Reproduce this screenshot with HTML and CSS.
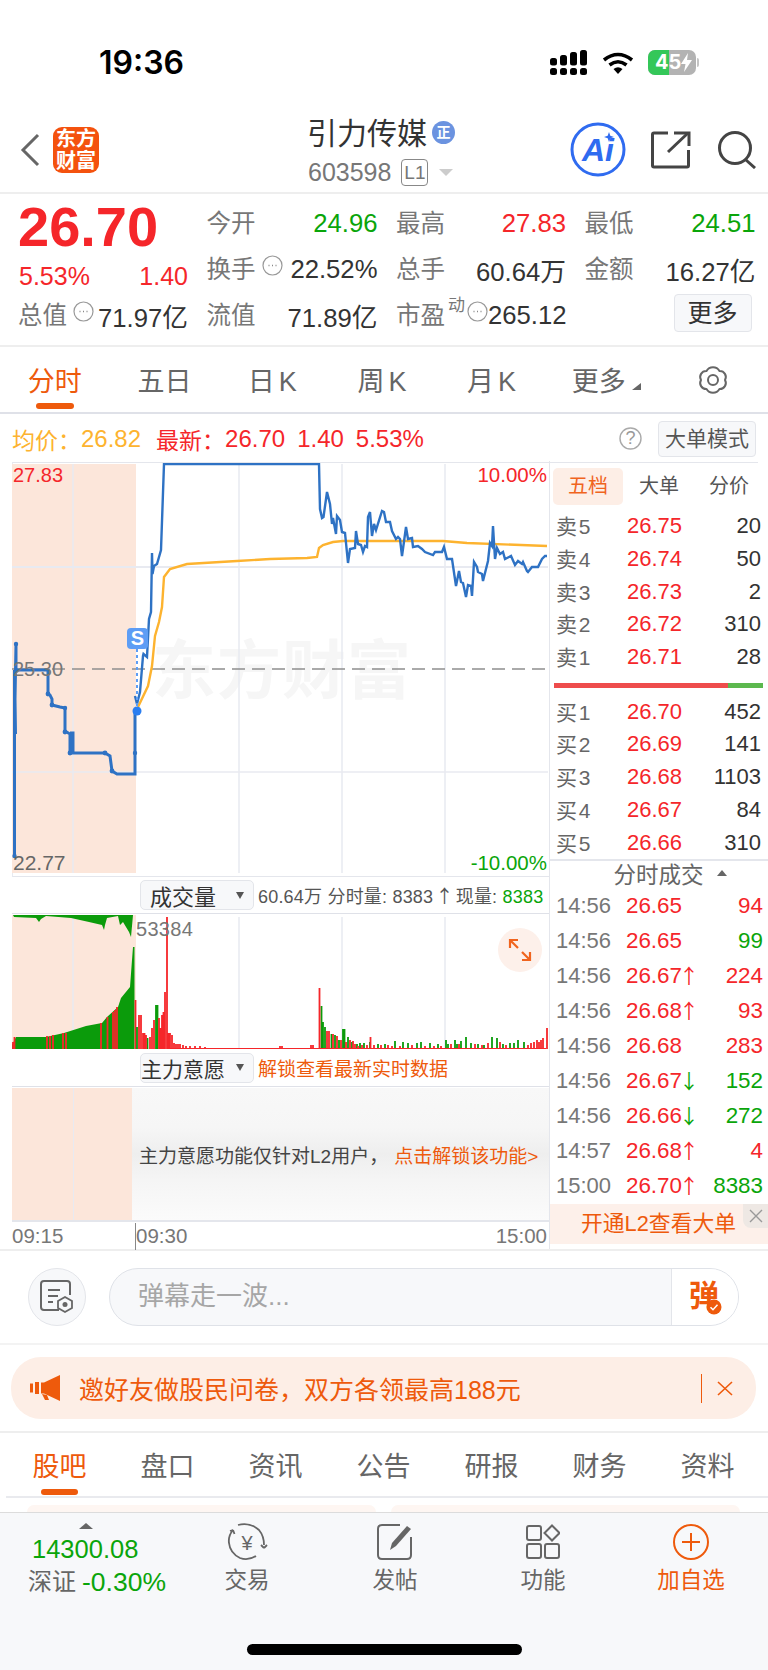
FILE: index.html
```html
<!DOCTYPE html>
<html lang="zh">
<head>
<meta charset="utf-8">
<title>引力传媒</title>
<link rel="stylesheet" href="styles.css">
</head>
<body>
<div class="page">

<header class="status">
  <div class="clock">19:36</div>
  <div class="status-icons">
    <svg class="sig" width="37" height="25" viewBox="0 0 37 25"><g fill="#000"><rect x="0" y="18" width="7" height="7" rx="2.5"/><rect x="10" y="18" width="7" height="7" rx="2.5"/><rect x="20" y="18" width="7" height="7" rx="2.5"/><rect x="30" y="18" width="7" height="7" rx="2.5"/><rect x="0" y="8" width="7" height="7.5" rx="2.5"/><rect x="10" y="5" width="7" height="10.5" rx="2.5"/><rect x="20" y="2" width="7" height="13.5" rx="2.5"/><rect x="30" y="0" width="7" height="15.5" rx="2.5"/></g></svg>
    <svg class="wifi" width="32" height="22" viewBox="0 0 32 22"><g fill="none" stroke="#000" stroke-width="3.6"><path d="M2 8 Q16 -3 30 8"/><path d="M7.5 13 Q16 6.5 24.500 13"/></g><path d="M11.500 17 Q16 13.500 20.500 17 L16 22Z" fill="#000"/></svg>
    <div class="battery"><span class="batt-fill"></span><span class="batt-text">45</span><svg class="bolt" width="11" height="19" viewBox="0 0 11 19"><path d="M7 0 L0 11 H4.500 L3 19 L11 7 H6Z" fill="#fff"/></svg><i class="batt-tip"></i></div>
  </div>
</header>

<nav class="nav">
  <svg class="back" width="20" height="34" viewBox="0 0 20 34"><path d="M18 2 L3 17 L18 32" fill="none" stroke="#666" stroke-width="3"/></svg>
  <div class="logo"><span>东方</span><span>财富</span></div>
  <div class="title-block">
    <div class="title-row"><span class="title">引力传媒</span><span class="badge-zheng">正</span></div>
    <div class="code-row"><span class="code">603598</span><span class="l1">L1</span><i class="caret"></i></div>
  </div>
  <svg class="ai" width="56" height="55" viewBox="0 0 56 55"><ellipse cx="28" cy="27.500" rx="26" ry="25.500" fill="none" stroke="#2f6bf0" stroke-width="3"/><text x="12" y="39" class="ai-text">Ai</text><path d="M39 10 L40.300 13.700 L44 15 L40.300 16.300 L39 20 L37.700 16.300 L34 15 L37.700 13.700Z" fill="#2f6bf0"/></svg>
  <svg class="share" width="40" height="38" viewBox="0 0 40 38"><g fill="none" stroke="#444" stroke-width="3"><path d="M17 2 H3 Q1.500 2 1.500 3.500 V34.500 Q1.500 36 3 36 H36 Q37.500 36 37.500 34.500 V19"/><path d="M17 21 L37 2"/><path d="M23 2 H38 V15"/></g></svg>
  <svg class="search" width="40" height="38" viewBox="0 0 40 38"><circle cx="18" cy="17" r="15.500" fill="none" stroke="#444" stroke-width="3"/><path d="M29 29 L38 37" stroke="#444" stroke-width="3"/></svg>
</nav>

<section class="stats">
  <div class="price-cell">
    <div class="price">26.70</div>
    <div class="change"><span>5.53%</span><span>1.40</span></div>
  </div>
  <div class="cell"><span class="lab">今开</span><span class="green">24.96</span></div>
  <div class="cell"><span class="lab">最高</span><span class="red">27.83</span></div>
  <div class="cell"><span class="lab">最低</span><span class="green">24.51</span></div>
  <div class="cell"><span class="lab with-hint">换手<svg class="hint" width="21" height="21" viewBox="0 0 21 21"><circle cx="10.500" cy="10.500" r="9.500" fill="none" stroke="#999" stroke-width="1.200"/><path d="M6.500 10.500h1M10 10.500h1M13.500 10.500h1" stroke="#888" stroke-width="1.500"/></svg></span><span>22.52%</span></div>
  <div class="cell"><span class="lab">总手</span><span>60.64万</span></div>
  <div class="cell"><span class="lab">金额</span><span>16.27亿</span></div>
  <div class="cell"><span class="lab with-hint">总值<svg class="hint" width="21" height="21" viewBox="0 0 21 21"><circle cx="10.500" cy="10.500" r="9.500" fill="none" stroke="#999" stroke-width="1.200"/><path d="M6.500 10.500h1M10 10.500h1M13.500 10.500h1" stroke="#888" stroke-width="1.500"/></svg></span><span>71.97亿</span></div>
  <div class="cell"><span class="lab">流值</span><span>71.89亿</span></div>
  <div class="cell"><span class="lab with-hint">市盈<sup class="dyn">动</sup><svg class="hint hint-tight" width="21" height="21" viewBox="0 0 21 21"><circle cx="10.500" cy="10.500" r="9.500" fill="none" stroke="#999" stroke-width="1.200"/><path d="M6.500 10.500h1M10 10.500h1M13.500 10.500h1" stroke="#888" stroke-width="1.500"/></svg></span><span>265.12</span></div>
  <div class="cell cell-more"><button class="more">更多</button></div>
</section>

<div class="period-tabs">
  <div class="ptab active">分时</div>
  <div class="ptab">五日</div>
  <div class="ptab k-tab">日K</div>
  <div class="ptab k-tab">周K</div>
  <div class="ptab k-tab">月K</div>
  <div class="ptab more-tab">更多<i class="corner"></i></div>
  <div class="ptab"><svg width="32" height="28" viewBox="0 0 32 28"><path d="M9.500 5 A7.500 7.500 0 0 1 22.500 5 A6 6 0 0 1 28 14 A6 6 0 0 1 22.500 23 A7.500 7.500 0 0 1 9.500 23 A6 6 0 0 1 4 14 A6 6 0 0 1 9.500 5Z" fill="none" stroke="#666" stroke-width="2" stroke-linejoin="round"/><circle cx="16" cy="14" r="5" fill="none" stroke="#666" stroke-width="2"/></svg></div>
</div>

<div class="info">
  <span class="avg">均价：</span><span class="avg v">26.82</span>
  <span class="red lbl">最新：</span><span class="red v">26.70</span><span class="red v">1.40</span><span class="red v">5.53%</span>
  <svg class="help" width="23" height="23" viewBox="0 0 23 23"><circle cx="11.500" cy="11.500" r="10.500" fill="none" stroke="#aaa" stroke-width="1.400"/><text x="11.500" y="17" class="help-q">?</text></svg>
  <button class="big-btn">大单模式</button>
</div>

<main class="main">
  <div class="charts">
    <div class="pc">
      <svg class="pc-svg" width="536" height="412" viewBox="12 464 536 412">
        <rect x="12" y="465" width="124" height="409" fill="#fce6da"/>
        <text x="152" y="694" class="watermark">东方财富</text>
        <g stroke="#e8eaf1" stroke-width="1.500"><path d="M73 465V874M239 465V874M342 465V874M445 465V874"/><path d="M12 568H548" stroke-width="2"/><path d="M12 773H548"/></g>
        <path d="M12 670H548" stroke="#8e8e8e" stroke-width="1.600" stroke-dasharray="13 7"/>
        <path d="M138 708 L148 687 L152 667 L155 637 L159 623 L162 608 L164 578 L170 570 L187 565 L237 562 L270 560 L307 559 L317 558 L319 549 L323 546 L333 543 L343 542 L383 542 L443 542 L467 544 L547 547" fill="none" stroke="#fdb32f" stroke-width="2.400"/>
        <path d="M14.500 857 V671 L15.500 735 L15 700 L16 645 L16 671 H48 V695 L50 696 L52 700 V706 L60 708 L65 709 V732 L70 735 V754 H73 V734 H70 M73 754 H105 L110 757 L112 772 L117 775 H135 V712" fill="none" stroke="#2e72c4" stroke-width="3"/>
        <g fill="#2e72c4"><circle cx="14.500" cy="857" r="2.200"/><circle cx="16" cy="645" r="2.200"/><circle cx="48" cy="695" r="2.400"/><circle cx="52" cy="706" r="2.400"/><circle cx="65" cy="709" r="2.200"/><circle cx="65" cy="733" r="2.400"/><circle cx="70" cy="754" r="2.400"/><circle cx="105" cy="754" r="2.400"/><circle cx="112" cy="772" r="2.400"/><circle cx="135" cy="754" r="2.200"/></g>
        <path d="M135 697 L137 705 L140 693 L143 657 L143.500 655 L147 658 L149 620 L151 613 L152 554 L152.500 575 L154 567 L157 565 L161 551 L164 465 H319 L320 510 L322 519 L323.500 518 L327 493 L330 505 L332 525 L333 519 L336 535 L337 517 L340 521 L342 533 L345 534 L348 564 L350 550 L355 549 L356 532 L358 545 L361 546 L363 553 L365 547 L367 548 L368 518 L370 513 L372 537 L374 525 L376 531 L382 512 L384 513 L386 523 L390 523 L392 532 L396 540 L398 538 L400 540 L402 557 L406 528 L408 540 L412 539 L413 548 L418 547 L422 550 L425 553 L433 556 L435 553 L442 553 L444 548 L447 560 L452 560 L456 587 L459 572 L461 583 L463 584 L466 598 L468 586 L471 587 L472 597 L474 563 L477 568 L478 573 L482 575 L483 582 L488 562 L490 544 L492 547 L493 527 L495 560 L497 549 L500 555 L503 553 L505 560 L511 557 L515 566 L518 562 L522 565 L523 563 L527 572 L528 573 L532 568 L538 568 L542 560 L545 557 L547 557" fill="none" stroke="#2e72c4" stroke-width="2.400"/>
        <path d="M137 650 V708" stroke="#5d9df5" stroke-width="2" stroke-dasharray="3 3"/>
        <circle cx="137" cy="712" r="4.500" fill="#2b7ef0"/>
      </svg>
      <span class="plabel tl red">27.83</span>
      <span class="plabel tr red">10.00%</span>
      <span class="plabel mid">25.30</span>
      <span class="plabel bl green">22.77</span>
      <span class="plabel br green">-10.00%</span>
      <span class="s-badge">S</span>
    </div>

    <div class="chart-head">
      <div class="drop drop-vol"><span>成交量</span><i class="tri"></i></div>
      <div class="vol-info">60.64万 分时量: 8383 <span class="cjk-arrow">↑</span> 现量: <b>8383</b></div>
    </div>

    <div class="vc">
      <svg class="vc-svg" width="536" height="135" viewBox="12 914 536 135">
        <rect x="12" y="915" width="124" height="134" fill="#fce6da"/>
        <path d="M73 917V1049M239 917V1049M342 917V1049M445 917V1049" stroke="#e8eaf1" stroke-width="1.500"/>
        <path d="M13 915 L14 917 L36 918 L39 922 L41 919 L46 916 L71 918 L89 922 L102 925 L104 930 L105 925 L107 918 L118 916 L120 925 L123 922 L129 932 L131 937 L133 915Z" fill="#0b9b0b"/>
        <path d="M12 1049 V1045 L16 1037 H46 L64 1033 L86 1026 L102 1023 L107 1017 L118 1007 L121 998 L130 987 L132 960 L133 947 H134.500 V1049Z" fill="#0b9b0b"/>
        <path d="M13 1049V1042M14.500 1049V1037M47 1049V1036M50 1049V1036M53 1049V1035M63 1049V1033M66 1049V1033M101 1049V1023M107.500 1049V1017M113 1049V1012M115 1049V1010M117 1049V1007M135.500 1049V1000" stroke="#f5262a" stroke-width="1.800"/>
        <path d="M137 1049V1027M147.500 1049V1038M156 1049V1005M157.500 1049V1005M321.500 1049V1006M323 1049V1022M325 1049V1027M331.500 1049V1034M335 1049V1035M339 1049V1040M343 1049V1029M344.500 1049V1029M348 1049V1037M352 1049V1042M357 1049V1044M360 1049V1043M364 1049V1043M370 1049V1042M378 1049V1044M385 1049V1044M395 1049V1041M403 1049V1042M408 1049V1043M417 1049V1043M421 1049V1042M430 1049V1043M438 1049V1044M446 1049V1040M448 1049V1044M455 1049V1040M457 1049V1044M461 1049V1041M466 1049V1037M471 1049V1043M478 1049V1044M484 1049V1045M492 1049V1037M497 1049V1038M503 1049V1044M510 1049V1043M514 1049V1043M518 1049V1040M524 1049V1042" stroke="#0b9b0b" stroke-width="1.800"/>
        <path d="M139 1049V1015M141 1049V1015M143 1049V1033M144.500 1049V1033M146 1049V1035M150 1049V1037M152 1049V1028M154 1049V1020M159 1049V1018M160.500 1049V1028M162 1049V1015M163.500 1049V1012M165 1049V992M167 1049V917M168.500 1049V1033M170 1049V1033M172 1049V1035M174 1049V1043M176 1049V1044M178 1049V1044M180 1049V1044M183 1049V1045M186 1049V1046M190 1049V1046M195 1049V1046M200 1049V1046M205 1049V1047M280 1049V1046M282 1049V1046M311 1049V1045M313 1049V1045M319.500 1049V988M327 1049V1031M329 1049V1031M333 1049V1034M337 1049V1036M341 1049V1040M346 1049V1042M350 1049V1040M353 1049V1041M355 1049V1044M358 1049V1046M362 1049V1045M367 1049V1045M370.500 1049V1037M374 1049V1045M381 1049V1045M388 1049V1045M392 1049V1046M400 1049V1046M412 1049V1045M425 1049V1046M434 1049V1046M441 1049V1046M451 1049V1044M459 1049V1044M475 1049V1044M482 1049V1045M488 1049V1043M500 1049V1042M506 1049V1045M528 1049V1045M531 1049V1043M534 1049V1042M537 1049V1040M539 1049V1042M541 1049V1040M543 1049V1038M547 1049V1028" stroke="#f5262a" stroke-width="1.800"/>
        <path d="M170 1048.500H546" stroke="#f5262a" stroke-width="1.200"/>
      </svg>
      <span class="vol-peak">53384</span>
      <div class="expand"><svg width="24" height="24" viewBox="0 0 24 24"><g fill="none" stroke="#f0641e" stroke-width="2.200"><path d="M2 10V2H10M2 2L10 10"/><path d="M22 14V22H14M22 22L14 14"/></g></svg></div>
    </div>

    <div class="chart-head head-intent">
      <div class="drop drop-intent"><span>主力意愿</span><i class="tri"></i></div>
      <div class="unlock">解锁查看最新实时数据</div>
    </div>

    <div class="intent">
      <div class="intent-peach"><i></i></div>
      <div class="intent-lock"><span>主力意愿功能仅针对L2用户，</span><span class="orange">点击解锁该功能&gt;</span></div>
    </div>

    <div class="axis"><span>09:15</span><span class="axis-open">09:30</span><span>15:00</span></div>
  </div>

  <aside class="side">
    <div class="side-tabs">
      <div class="stab active">五档</div>
      <div class="stab">大单</div>
      <div class="stab">分价</div>
    </div>
    <div class="book">
      <div class="brow"><span class="bl">卖 5</span><span class="bp red">26.75</span><span class="bv">20</span></div>
      <div class="brow"><span class="bl">卖 4</span><span class="bp red">26.74</span><span class="bv">50</span></div>
      <div class="brow"><span class="bl">卖 3</span><span class="bp red">26.73</span><span class="bv">2</span></div>
      <div class="brow"><span class="bl">卖 2</span><span class="bp red">26.72</span><span class="bv">310</span></div>
      <div class="brow"><span class="bl">卖 1</span><span class="bp red">26.71</span><span class="bv">28</span></div>
    </div>
    <div class="ratio"><i class="ratio-red"></i><i class="ratio-green"></i></div>
    <div class="book book-buy">
      <div class="brow"><span class="bl">买 1</span><span class="bp red">26.70</span><span class="bv">452</span></div>
      <div class="brow"><span class="bl">买 2</span><span class="bp red">26.69</span><span class="bv">141</span></div>
      <div class="brow"><span class="bl">买 3</span><span class="bp red">26.68</span><span class="bv">1103</span></div>
      <div class="brow"><span class="bl">买 4</span><span class="bp red">26.67</span><span class="bv">84</span></div>
      <div class="brow"><span class="bl">买 5</span><span class="bp red">26.66</span><span class="bv">310</span></div>
    </div>
    <div class="deals-head">分时成交<i class="tri-up"></i></div>
    <div class="deals">
      <div class="drow"><span class="dt">14:56</span><span class="dp red">26.65</span><span class="da"></span><span class="dv red">94</span></div>
      <div class="drow"><span class="dt">14:56</span><span class="dp red">26.65</span><span class="da"></span><span class="dv green">99</span></div>
      <div class="drow"><span class="dt">14:56</span><span class="dp red">26.67</span><span class="da red">↑</span><span class="dv red">224</span></div>
      <div class="drow"><span class="dt">14:56</span><span class="dp red">26.68</span><span class="da red">↑</span><span class="dv red">93</span></div>
      <div class="drow"><span class="dt">14:56</span><span class="dp red">26.68</span><span class="da"></span><span class="dv red">283</span></div>
      <div class="drow"><span class="dt">14:56</span><span class="dp red">26.67</span><span class="da green">↓</span><span class="dv green">152</span></div>
      <div class="drow"><span class="dt">14:56</span><span class="dp red">26.66</span><span class="da green">↓</span><span class="dv green">272</span></div>
      <div class="drow"><span class="dt">14:57</span><span class="dp red">26.68</span><span class="da red">↑</span><span class="dv red">4</span></div>
      <div class="drow"><span class="dt">15:00</span><span class="dp red">26.70</span><span class="da red">↑</span><span class="dv green">8383</span></div>
    </div>
    <div class="l2-banner">开通L2查看大单<div class="l2-close"><svg width="14" height="14" viewBox="0 0 14 14"><path d="M1 1L13 13M13 1L1 13" stroke="#999" stroke-width="1.400"/></svg></div></div>
  </aside>
</main>

<div class="danmu">
  <div class="danmu-btn"><svg width="34" height="34" viewBox="0 0 34 34"><g fill="none" stroke="#666" stroke-width="2"><path d="M19 30 H4 Q1 30 1 27 V4 Q1 1 4 1 H27 Q30 1 30 4 V15"/><path d="M8 10H20M8 16H18M8 22H13"/><path d="M25 17 L32 21 V28 L25 32 L18 28 V21Z" stroke-width="1.800"/></g><circle cx="25" cy="24.500" r="2.500" fill="#666"/></svg></div>
  <div class="danmu-input"><span class="danmu-ph">弹幕走一波...</span><span class="danmu-send">弹<svg class="danmu-check" width="16" height="16" viewBox="0 0 16 16"><circle cx="8" cy="8" r="7.500" fill="#ee5a0c"/><path d="M4.500 8.200L7 10.700L11.500 5.700" fill="none" stroke="#fff" stroke-width="1.500"/></svg></span></div>
</div>

<div class="notice-wrap">
  <div class="notice">
    <svg width="30" height="26" viewBox="0 0 30 26"><path d="M30 0 V26 L14 18.500 H11 V7.500 H14Z" fill="#ee5a0c"/><path d="M12 19 L15 25 H19 L17 20Z" fill="#ee5a0c"/><rect x="0" y="8.500" width="3" height="9" fill="#ee5a0c"/><rect x="5" y="7" width="4" height="12" fill="#ee5a0c"/></svg>
    <span class="notice-text">邀好友做股民问卷，双方各领最高188元</span>
    <i class="notice-sep"></i>
    <svg width="16" height="15" viewBox="0 0 16 15"><path d="M1 1L15 14M15 1L1 14" stroke="#ee5a0c" stroke-width="1.600"/></svg>
  </div>
</div>

<div class="sub-tabs">
  <div class="sub active">股吧</div>
  <div class="sub">盘口</div>
  <div class="sub">资讯</div>
  <div class="sub">公告</div>
  <div class="sub">研报</div>
  <div class="sub">财务</div>
  <div class="sub">资料</div>
</div>

<div class="peek"><i></i><i></i></div>

<footer class="toolbar">
  <div class="index">
    <i class="index-tri"></i>
    <div class="index-val green">14300.08</div>
    <div class="index-row"><span>深证</span><span class="green">-0.30%</span></div>
  </div>
  <div class="tool">
    <svg width="42" height="38" viewBox="0 0 42 38"><g fill="none" stroke="#666" stroke-width="1.800"><path d="M7 7 Q2 13 3 20 Q4 30 14 35 Q22 38 30 33"/><path d="M12 2 Q24 -1 33 7 Q38 13 38 22"/><path d="M7 7L4 8M7 7L8.500 11M38 25L41 22M38 25L35 22"/></g><text x="21" y="27" class="yen">¥</text></svg>
    <span>交易</span>
  </div>
  <div class="tool">
    <svg width="36" height="36" viewBox="0 0 36 36"><g fill="none" stroke="#666" stroke-width="2"><path d="M23 1 H5 Q1 1 1 5 V31 Q1 35 5 35 H30 Q34 35 34 31 V13"/></g><path d="M13 26 L15 19 L30 2 L34 5 L19 22Z" fill="#666"/></svg>
    <span>发帖</span>
  </div>
  <div class="tool">
    <svg width="34" height="34" viewBox="0 0 34 34"><g fill="none" stroke="#666" stroke-width="2"><rect x="1" y="1" width="14" height="14" rx="2"/><rect x="1" y="19" width="14" height="14" rx="2"/><rect x="19" y="19" width="14" height="14" rx="2"/><path d="M26 0.500 L33.500 8 L26 15.500 L18.500 8Z"/></g></svg>
    <span>功能</span>
  </div>
  <div class="tool tool-add">
    <svg width="36" height="36" viewBox="0 0 36 36"><circle cx="18" cy="18" r="17" fill="none" stroke="#ee5a0c" stroke-width="2"/><path d="M18 9V27M9 18H27" stroke="#ee5a0c" stroke-width="2"/></svg>
    <span>加自选</span>
  </div>
  <i class="home"></i>
</footer>

</div>
</body>
</html>
```

FILE: styles.css
```css
* { box-sizing: border-box; }
html, body { margin: 0; padding: 0; background: #fff; }
body { font-family: "Liberation Sans", "Noto Sans CJK SC", sans-serif; color: #333; }
.page { width: 768px; height: 1670px; overflow: hidden; position: relative; }
i { display: block; font-style: normal; }
button { font: inherit; padding: 0; cursor: pointer; }
.red { color: #f5262a; }
.green { color: #0aa50a; }
.orange { color: #ee5a0c; }

/* status bar */
.status { height: 105px; display: flex; justify-content: space-between; align-items: flex-start; padding: 47px 72px 0 99px; }
.clock { font-family: Inter, "Liberation Sans", sans-serif; font-weight: 600; font-size: 32px; line-height: 31px; color: #000; }
.status-icons { display: flex; align-items: flex-start; padding-top: 3px; }
.wifi { margin-left: 15px; margin-top: 2px; }
.battery { position: relative; width: 48px; height: 25px; margin-left: 14px; background: #b3b3b3; border-radius: 7px; overflow: visible; color: #fff; font-family: Inter, sans-serif; font-weight: 700; font-size: 20px; line-height: 25px; }
.batt-fill { position: absolute; left: 0; top: 0; bottom: 0; width: 21px; background: #34c759; border-radius: 7px 0 0 7px; }
.batt-text { position: absolute; left: 7px; top: 0; }
.bolt { position: absolute; left: 33px; top: 3px; }
.batt-tip { position: absolute; right: -3px; top: 8px; width: 2px; height: 9px; background: #c4c4c4; border-radius: 0 2px 2px 0; }

/* nav */
.nav { height: 87px; display: flex; align-items: center; position: relative; }
.back { margin-left: 20px; margin-top: 2px; }
.logo { width: 46px; height: 46px; margin-left: 13px; margin-top: 2px; border-radius: 9px; background: #f4520e; color: #fff; font-weight: 700; font-size: 20px; line-height: 22px; display: flex; flex-direction: column; align-items: center; justify-content: center; }
.title-block { margin-left: 208px; width: 148px; }
.title-row { display: flex; align-items: center; height: 36px; margin-top: 6px; }
.title { font-size: 30px; line-height: 36px; color: #333; }
.badge-zheng { width: 23px; height: 23px; margin-left: 5px; margin-top: -4px; border-radius: 50%; background: #6b93e0; color: #fff; font-size: 14px; font-weight: 700; line-height: 23px; text-align: center; }
.code-row { display: flex; align-items: center; height: 30px; margin-top: 5px; }
.code { font-size: 25px; color: #777; line-height: 30px; margin-right: 10px; margin-left: 1px; }
.l1 { width: 27px; height: 27px; border: 1px solid #888; border-radius: 4px; font-size: 19px; line-height: 25px; text-align: center; color: #777; }
.caret { margin-left: 11px; width: 0; height: 0; border-left: 7px solid transparent; border-right: 7px solid transparent; border-top: 7px solid #ccc; }
.ai { margin-left: 115px; margin-top: 2px; flex: none; }
.ai-text { font-family: "Liberation Sans", sans-serif; font-weight: 700; font-style: italic; font-size: 32px; fill: #2f6bf0; }
.share { margin-left: 25px; margin-top: 2px; flex: none; }
.search { margin-left: 26px; margin-top: 2px; flex: none; }

/* stats */
.stats { border-top: 2px solid #eee; border-bottom: 2px solid #eee; height: 155px; padding: 6px 13px 0 19px; display: grid; grid-template-columns: 169px 170px 169px 170px; column-gap: 19.500px; grid-template-rows: 46px 46px 46px; font-size: 25.700px; color: #333; }
.price-cell { grid-row: span 2; }
.price { font-size: 56px; line-height: 52px; font-weight: 700; color: #f5262a; margin-top: 1px; margin-left: -1px; }
.change { display: flex; justify-content: space-between; color: #f5262a; font-size: 25px; line-height: 28px; margin-top: 9px; }
.cell { display: flex; justify-content: space-between; align-items: center; white-space: nowrap; }
.lab { color: #777; display: flex; align-items: center; font-size: 24.500px; padding-bottom: 4px; margin-left: -1px; }
.hint { margin-left: 6px; margin-top: -4px; }
.hint-tight { margin-left: 2px; margin-top: -4px; }
.dyn { font-size: 17px; line-height: 18px; margin: -14px 0 0 3px; }
.cell-more { justify-content: flex-end; padding-right: 4px; }
.more { width: 78px; height: 38px; background: #f7f8fa; border: 1px solid #e3e5ea; border-radius: 4px; color: #333; font-size: 25px; line-height: 36px; margin-top: -5px; }

/* period tabs */
.period-tabs { height: 67px; border-bottom: 2px solid #dfe1e8; display: grid; grid-template-columns: repeat(7, 109.700px); font-size: 27px; color: #666; }
.ptab { position: relative; display: flex; align-items: center; justify-content: center; height: 65px; white-space: nowrap; }
.ptab.active { color: #ee5a0c; }
.ptab.active::after { content: ""; position: absolute; left: 36px; top: 56px; width: 38px; height: 6px; border-radius: 3px; background: #ee5a0c; }
.k-tab { letter-spacing: 4px; }
.more-tab { padding-left: 6px; }
.corner { width: 0; height: 0; border-left: 9px solid transparent; border-bottom: 7px solid #666; margin: 14px 0 0 6px; }

/* info */
.info { height: 47px; display: flex; align-items: center; gap: 12px; padding: 2px 12px 0 12px; font-size: 24px; }
.info .avg, .info .lbl { font-size: 23px; }
.info .avg { color: #fdb32f; }
.info .avg.v { font-size: 24px; margin-left: -12px; margin-right: 3px; }
.info .lbl + .v { margin-left: -12px; }
.help { margin-left: auto; flex: none; }
.help-q { font-size: 18px; fill: #999; text-anchor: middle; }
.big-btn { width: 98px; height: 36px; background: #f7f8fa; border: 1px solid #e3e5ea; border-radius: 4px; font-size: 21px; line-height: 34px; color: #555; margin-left: 4px; margin-top: 0; }

/* main */
.main { height: 788px; display: flex; }
.charts { width: 537px; margin-left: 12px; flex: none; }
.pc { position: relative; height: 415px; border-top: 1px solid #e4e6ec; border-bottom: 1px solid #e4e6ec; margin-top: 1px; border-left: 1px solid #e8eaf0; }
.pc-svg { display: block; margin-left: -1px; }
.watermark { font-size: 64px; fill: #f6f6f6; font-weight: 700; letter-spacing: 1px; }
.plabel { position: absolute; font-size: 20.500px; line-height: 20px; white-space: nowrap; }
.tl { left: 0; top: 2px; font-size: 20px; }
.tr { right: 2px; top: 2px; }
.mid { left: 0; top: 196px; color: #777; font-size: 20px; }
.bl { left: 0; top: 390px; font-size: 20px; }
.br { right: 2px; top: 390px; }
.s-badge { position: absolute; left: 114px; top: 165px; width: 21px; height: 21px; border-radius: 4px; background: #5d9df5; color: #fff; font-weight: 700; font-size: 20px; line-height: 21px; text-align: center; }

.chart-head { height: 37px; display: flex; align-items: center; padding-left: 128px; border-bottom: 1px solid #dfe1e8; }
.head-intent { height: 38px; }
.drop { width: 114px; height: 30px; background: #f7f8fa; border: 1px solid #e3e5ea; border-radius: 5px; display: flex; align-items: center; justify-content: space-between; font-size: 22px; color: #333; }
.drop-vol { padding: 0 9px; }
.drop-intent { padding: 0 9px 0 0; font-size: 21px; }
.tri { width: 0; height: 0; border-left: 4.500px solid transparent; border-right: 4.500px solid transparent; border-top: 7px solid #555; }
.vol-info { margin-left: 4px; font-size: 18px; letter-spacing: 0.200px; color: #555; white-space: nowrap; }
.vol-info b { font-weight: 400; color: #0aa50a; }
.cjk-arrow { font-family: "Noto Sans CJK SC", sans-serif; display: inline-block; width: 12px; text-indent: -3px; }
.unlock { margin-left: 4px; font-size: 19px; color: #ee5a0c; white-space: nowrap; }

.vc { position: relative; height: 135px; }
.vc-svg { display: block; }
.vol-peak { position: absolute; left: 124px; top: 7px; font-size: 20px; line-height: 16px; color: #777; letter-spacing: 0.300px; }
.expand { position: absolute; left: 486px; top: 14px; width: 44px; height: 44px; border-radius: 50%; background: #fdf0ea; display: flex; align-items: center; justify-content: center; }

.intent { height: 135px; display: flex; border-bottom: 2px solid #e4e6ec; padding-top: 1px; }
.intent-peach { width: 120px; background: #fce6da; position: relative; }
.intent-peach i { position: absolute; left: 61px; top: 0; bottom: 0; width: 1px; background: #e8eaf1; }
.intent-lock { flex: 1; display: flex; align-items: center; padding-left: 7px; gap: 6px; font-size: 19px; color: #444; white-space: nowrap; background: linear-gradient(#f8f8f8 0%, #f6f6f6 30%, #eeeeee 50%, #f5f5f5 70%, #fbfbfb 100%); }

.axis { height: 27px; display: flex; justify-content: space-between; align-items: center; font-size: 20.500px; color: #777; padding-right: 2px; position: relative; }
.axis-open { position: absolute; left: 124px; }
.axis-open::before { content: ""; position: absolute; left: -1px; top: -1px; height: 27px; width: 1px; background: #888; }

/* side panel */
.side { width: 219px; flex: none; border-left: 1px solid #e4e6ec; }
.side-tabs { display: grid; grid-template-columns: 71px 70px 70px; padding: 5px 0 0 3px; height: 48px; font-size: 20px; color: #555; border-top: 1px solid #e4e6ec; margin-right: 10px; margin-top: 1px; }
.stab { height: 37px; line-height: 37px; text-align: center; white-space: nowrap; }
.stab.active { width: 70px; background: #fdeee6; border-radius: 5px; color: #f0641e; }
.book { padding: 0 7px 0 6px; }
.brow { height: 32.700px; display: flex; align-items: center; font-size: 22px; color: #333; }
.bl { width: 66px; font-size: 21px; color: #666; word-spacing: -4px; white-space: nowrap; padding-bottom: 2px; }
.bp { width: 60px; text-align: right; }
.bv { flex: 1; text-align: right; }
.ratio { height: 5px; margin: 10px 5px 7px 4px; display: flex; }
.ratio-red { width: 174px; background: #ee4c4c; }
.ratio-green { flex: 1; background: #5cb84e; }
.deals-head { border-top: 2px solid #e4e6ec; height: 30px; display: flex; align-items: center; justify-content: center; font-size: 22.500px; color: #666; padding: 0 0 3px 22px; margin-top: 0; }
.tri-up { width: 0; height: 0; border-left: 5px solid transparent; border-right: 5px solid transparent; border-bottom: 6px solid #666; margin-left: 13px; }
.deals { height: 315px; }
.drow { height: 35px; display: flex; align-items: center; font-size: 22.400px; padding: 0 5px 0 6px; white-space: nowrap; }
.dt { width: 57px; color: #777; font-size: 22px; }
.dp { width: 69px; text-align: right; }
.da { width: 14px; font-family: "Noto Sans CJK SC", sans-serif; font-size: 20px; line-height: 20px; display: flex; justify-content: center; }
.dv { flex: 1; text-align: right; }
.l2-banner { position: relative; height: 40px; background: #fdf0ea; color: #ee5a0c; font-size: 21.800px; line-height: 40px; padding-left: 31px; white-space: nowrap; margin-top: 0; }
.l2-close { position: absolute; right: 0; top: 0; width: 25px; height: 24px; background: #eee8e4; border-bottom-left-radius: 8px; display: flex; align-items: center; justify-content: center; }

/* danmu */
.danmu { height: 96px; border-top: 2px solid #eee; border-bottom: 2px solid #f3f3f3; display: flex; align-items: center; padding-left: 28px; }
.danmu-btn { width: 58px; height: 58px; border-radius: 50%; border: 1px solid #e3e5ea; background: #f7f8fa; display: flex; align-items: center; justify-content: center; }
.danmu-input { width: 630px; height: 58px; margin-left: 23px; border: 1px solid #dfe2e8; border-radius: 29px; background: #f7f8fa; display: flex; overflow: hidden; }
.danmu-ph { flex: 1; padding-left: 28px; font-size: 26px; line-height: 54px; color: #a6a6a6; }
.danmu-send { position: relative; width: 67px; background: #fff; border-left: 1px solid #e3e5ea; color: #ee5a0c; font-size: 30px; font-weight: 700; line-height: 54px; padding-left: 17px; }
.danmu-check { position: absolute; left: 34px; top: 30px; }

/* notice */
.notice-wrap { height: 88px; padding: 12px 12px 0 11px; border-bottom: 2px solid #eee; }
.notice { height: 62px; border-radius: 30px; background: #fdeee6; display: flex; align-items: center; padding-left: 19px; color: #ee5a0c; font-size: 25px; }
.notice-text { margin-left: 19px; width: 622px; white-space: nowrap; }
.notice-sep { width: 1px; height: 29px; background: #ee5a0c; margin-right: 15px; }

/* sub tabs */
.sub-tabs { height: 65px; margin-left: 6px; border-bottom: 2px solid #e9eaee; display: grid; grid-template-columns: repeat(7, 108px); font-size: 27px; color: #666; }
.sub { display: flex; align-items: center; justify-content: center; position: relative; height: 63px; margin-left: -1px; }
.sub.active { color: #ee5a0c; }
.sub.active::after { content: ""; position: absolute; left: 36px; top: 56px; width: 37px; height: 6px; border-radius: 3px; background: #ee5a0c; }

.peek { height: 14px; display: flex; gap: 15px; padding: 7px 28px 0 27px; }
.peek i { flex: 1; background: #fef6f2; border-radius: 10px 10px 0 0; }

/* toolbar */
.toolbar { position: relative; height: 158px; background: #f7f8fa; border-top: 1px solid #dcdcdc; display: flex; padding-top: 10px; }
.index { width: 173px; padding-left: 28px; flex: none; }
.index-tri { width: 0; height: 0; margin: 0 0 0 51px; border-left: 7px solid transparent; border-right: 7px solid transparent; border-bottom: 6px solid #666; }
.index-val { font-size: 25.500px; line-height: 30px; margin: 5px 0 0 4px; }
.index-row { display: flex; gap: 6px; font-size: 26.500px; line-height: 30px; color: #666; margin-top: 3px; white-space: nowrap; }
.index-row span:first-child { font-size: 24px; }
.tool { width: 148px; flex: none; display: flex; flex-direction: column; align-items: center; font-size: 22.500px; color: #666; }
.tool svg { height: 38px; display: block; }
.tool span { margin-top: 5px; line-height: 30px; }
.tool-add { color: #ee5a0c; }
.yen { font-size: 20px; fill: #666; text-anchor: middle; }
.home { position: absolute; left: 247px; top: 131px; width: 275px; height: 11px; border-radius: 6px; background: #000; }
```
